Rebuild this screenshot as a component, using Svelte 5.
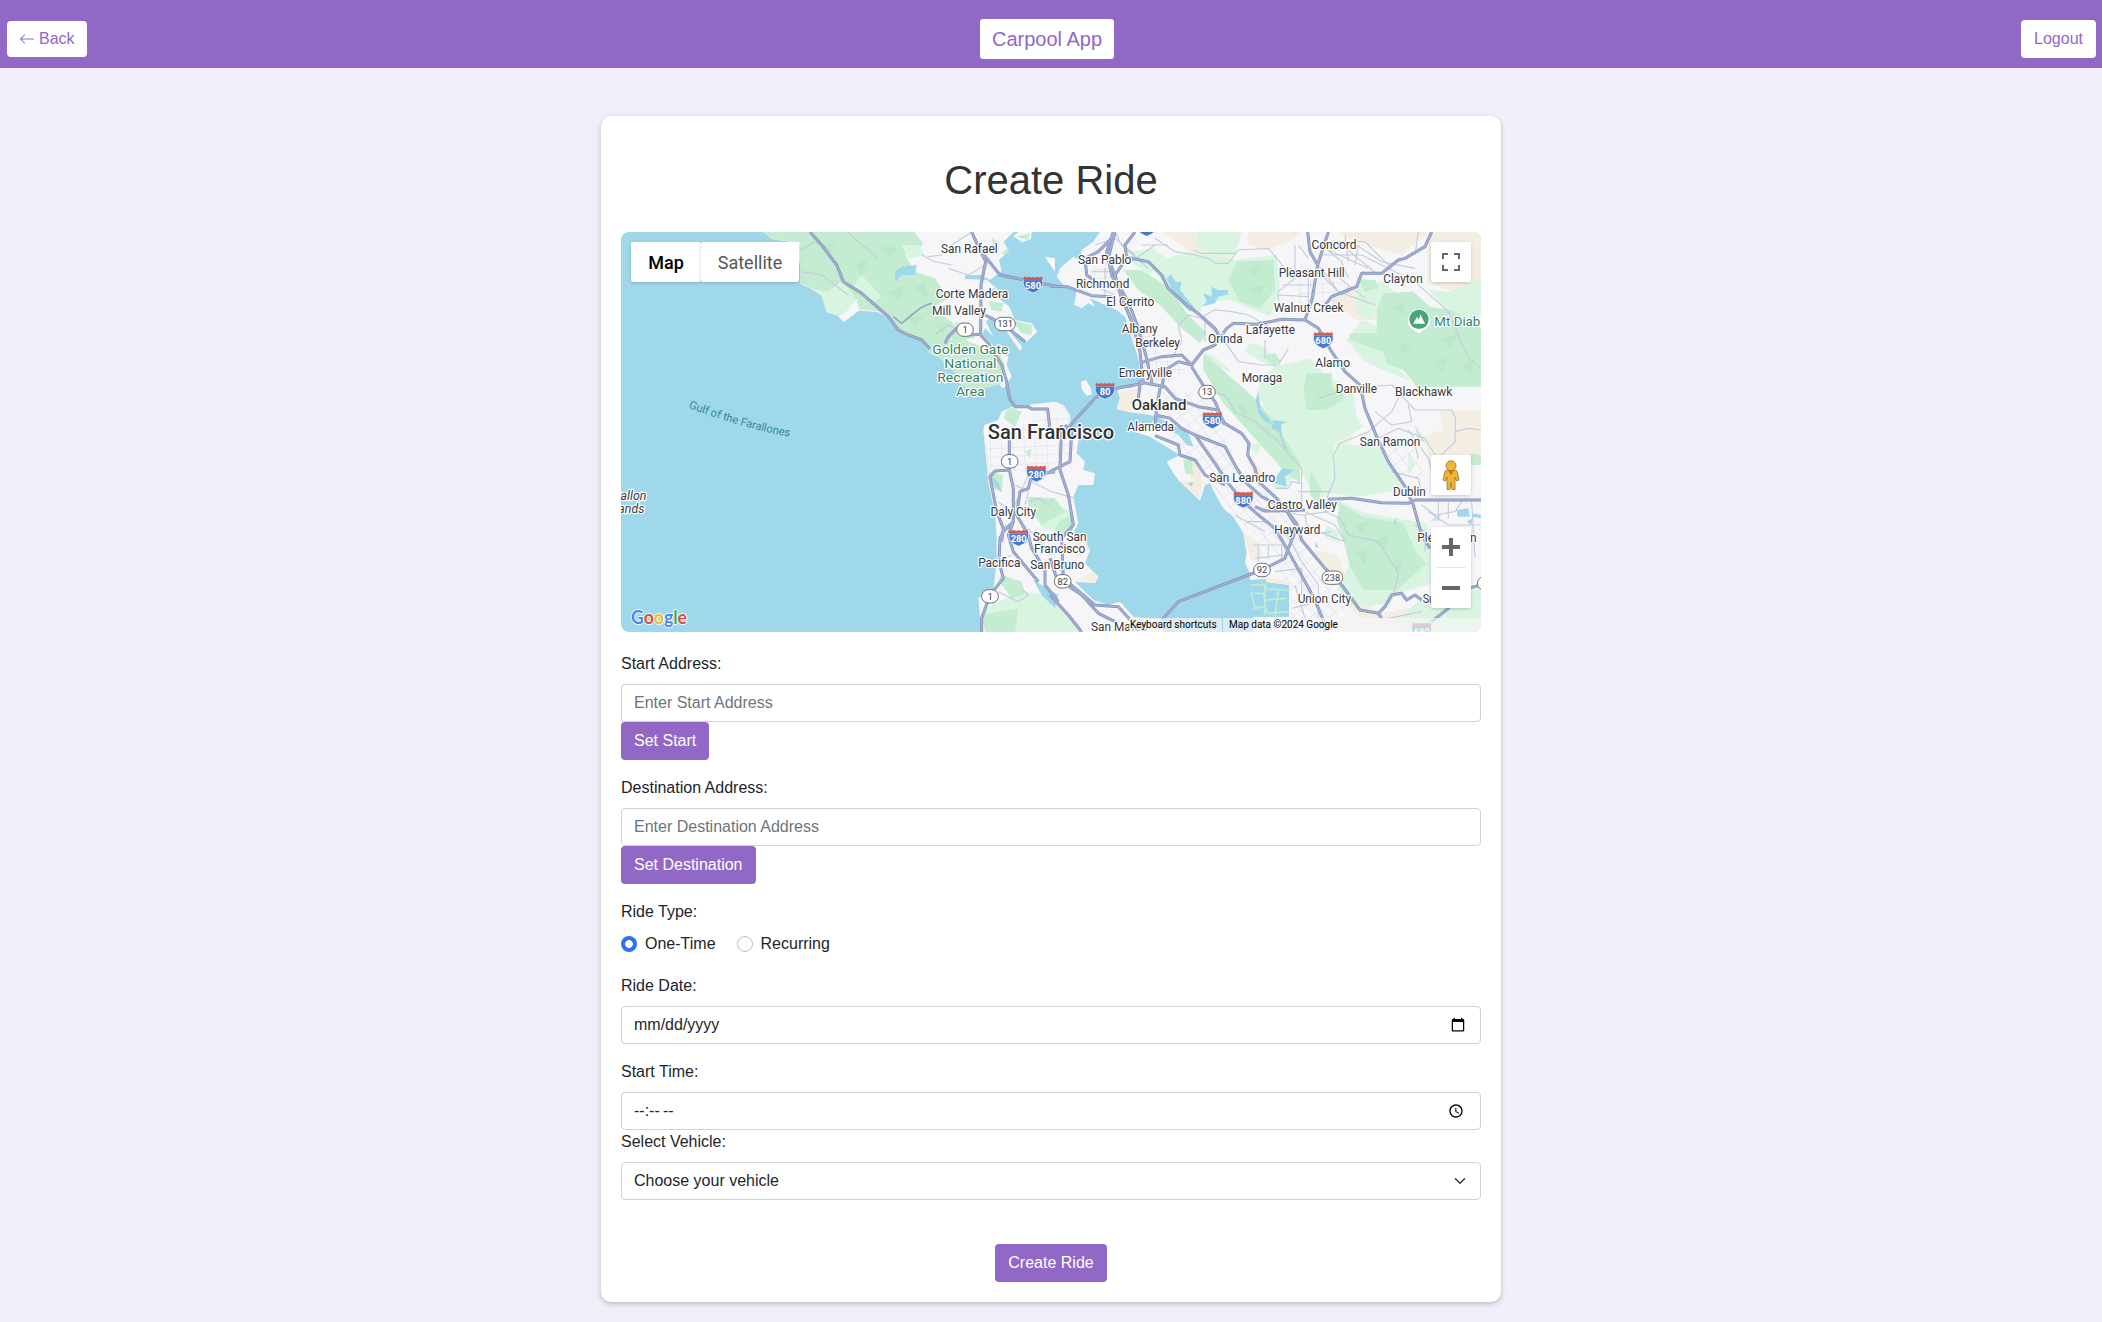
<script>
  let rideType = $state('one-time');

  const water = '#a0d8eb';

  const land = [
    // Marin
    'M445 21L470 42L530 52L556 120L556 176L590 193L620 212L635 262L668 272L687 291L705 277L733 256L790 256L830 280L850 312L880 335L920 350L945 385L975 398L1000 430L1022 442L1020 465L1052 487L1100 492L1150 478L1165 490L1190 455L1175 420L1180 395L1150 380L1120 345L1102 328L1110 308L1135 335L1112 290L1130 272L1165 305L1215 378L1222 366L1188 325L1235 350L1267 320L1250 295L1200 285L1183 245L1150 220L1146 190L1115 165L1050 163L1050 150L1100 150L1125 165L1160 138L1152 105L1182 78L1165 50L1195 21Z',
    'M1195 34L1210 21L1250 21L1248 42L1222 52Z',
    // San Francisco peninsula
    'M1190 545L1230 548L1250 538L1320 530L1345 540L1365 570L1368 615L1390 645L1385 685L1410 710L1405 735L1440 745L1435 780L1390 780L1375 815L1390 895L1375 925L1405 935L1425 975L1410 1015L1450 1055L1440 1075L1380 1070L1435 1125L1480 1140L1515 1130L1555 1175L1645 1185L1645 1221L1100 1221L1095 1175L1090 1120L1135 1095L1140 1055L1145 1015L1145 935L1140 865L1120 775L1115 715L1105 615L1108 600L1150 585L1160 560Z',
    // East Bay
    'M1455 21L1435 50L1400 75L1395 105L1375 95L1335 130L1325 155L1345 180L1385 195L1378 240L1400 250L1420 235L1440 245L1425 220L1505 255L1530 275L1550 340L1570 400L1580 470L1545 490L1505 487L1515 520L1505 552L1545 562L1605 570L1615 600L1540 615L1605 635L1695 690L1655 710L1675 745L1690 765L1755 827L1770 780L1785 775L1805 815L1825 850L1855 875L1885 925L1895 985L1890 1015L1905 1045L1905 1065L2022 1080L2022 1175L1915 1175L1915 1221L2598 1221L2598 21Z',
    'M1398 470L1412 465L1428 490L1430 508L1415 512L1400 492Z',
    'M1290 95L1320 100L1320 140L1306 120Z'
  ];

  const sand = [
    'M1640 21L1720 75L1790 100L1850 130L1840 60L1800 21Z', 'M1900 21L2060 21L2040 40L1960 75L1900 60Z',
    'M2170 21L2440 21L2360 90L2290 70L2200 40Z', 'M2135 215L2225 195L2300 285L2225 285L2165 245Z', 'M2230 175L2310 170L2340 205L2300 250Z',
    'M2440 21L2598 21L2598 170L2500 195L2440 175Z', 'M1515 500L1580 490L1550 540L1600 565L1510 555Z',
    'M1705 690L1745 700L1765 775L1750 825L1685 765L1730 770Z', 'M2425 635L2485 615L2475 555L2598 555L2598 705L2440 700Z',
    'M2075 615L2225 600L2205 655L2155 665L2145 700L2105 665Z', 'M1910 700L1945 740L1935 775L1915 740Z',
    'M1885 925L1930 950L1945 1000L1910 1010Z', 'M2095 975L2170 990L2190 1055L2130 1030Z',
    'M2195 1095L2295 1165L2405 1145L2470 1150L2410 1195L2265 1205L2190 1135Z', 'M1390 1065L1440 1035L1445 1075Z',
    'M1375 925L1405 935L1425 975L1385 1000Z', 'M1105 615L1120 700L1135 830L1145 865L1120 775Z', 'M1925 1050L2030 1070L2020 1085L1925 1070Z'
  ];

  const paleGreen = [
    'M860 60L930 50L900 90L870 85Z', 'M1750 21L1880 21L1860 90L1790 90L1740 60Z', 'M1530 80L1605 75L1620 130L1605 150L1560 120Z',
    'M1605 65L1665 105L1715 85L1805 125L1865 165L1865 215L1805 225L1765 235L1755 265L1715 255L1665 195L1605 125Z',
    'M1655 100L1720 80L1860 105L1985 90L1995 195L1965 275L1845 225L1775 230L1705 245L1665 175Z',
    'M1975 425L2085 400L2125 445L2215 495L2225 575L2245 605L2160 655L2145 805L2105 825L2045 715L2005 655L1965 575L1925 505L1935 475Z',
    'M2165 655L2295 665L2365 795L2225 815L2145 805Z', 'M2225 155L2305 175L2345 205L2285 255L2265 285L2225 265Z',
    'M2440 195L2500 200L2598 160L2598 300L2500 260Z', 'M2195 345L2240 285L2310 310L2320 400L2390 470L2340 450L2250 410Z',
    'M1900 355L1935 360L1980 395L1985 430L1940 410L1890 380Z', 'M1760 380L1800 395L1850 440L1810 430Z',
    'M2165 825L2255 865L2435 895L2455 975L2455 1075L2345 1105L2325 1135L2245 1145L2165 1095L2205 1015Z',
    'M1985 745L2040 750L2010 795L1970 785Z', 'M2350 1180L2420 1120L2598 1090L2598 1221L2360 1221Z',
    'M1220 1100L1310 1110L1370 1180L1390 1221L1110 1221L1110 1150Z', 'M1250 815L1310 830L1370 860L1350 930L1280 910Z',
    'M2380 680L2400 720L2380 750Z', 'M1900 660L1945 650L1925 690Z', 'M2130 900L2170 920L2175 955L2130 940Z'
  ];

  const green = [
    'M445 21L900 21L930 55L870 90L900 140L960 160L1000 220L950 250L1010 290L1060 350L1150 380L1170 420L1160 478L1100 492L1052 487L1020 465L1000 430L945 385L850 312L733 256L710 205L680 170L640 200L600 195L556 175L556 52L470 42Z',
    'M1120 230L1165 235L1160 260L1130 255Z', 'M1190 285L1250 300L1250 330L1220 325Z', 'M1255 382L1290 355L1305 378L1302 400L1262 396Z',
    'M1160 85L1190 65L1180 95Z', 'M1205 35L1245 25L1240 45Z', 'M1180 545L1220 560L1200 605L1165 580Z',
    'M1525 135L1580 135L1665 190L1715 265L1775 325L1755 355L1695 305L1635 240L1570 195Z',
    'M1865 110L1975 105L1980 195L1935 250L1875 230L1840 165Z',
    'M2285 255L2305 205L2395 200L2445 245L2505 255L2598 305L2598 485L2505 485L2405 485L2365 435L2315 415L2305 380L2205 345L2205 325L2285 325Z',
    'M1765 385L1845 455L1915 515L1975 585L2055 715L2055 775L2005 735L1915 635L1825 535L1765 435Z',
    'M2075 445L2150 445L2150 485L2185 495L2185 525L2135 555L2075 555L2065 495Z',
    'M1940 390L1980 385L1998 410L1975 420Z', 'M2230 165L2280 165L2290 190L2250 200Z', 'M2185 200L2200 180L2205 205Z',
    'M2175 835L2245 875L2365 895L2405 985L2435 1015L2345 1095L2245 1095L2205 1025L2185 945L2165 885Z',
    'M1240 815L1320 820L1350 860L1280 900L1240 850Z', 'M1120 740L1165 750L1160 800L1130 790Z', 'M1160 1050L1220 1070L1230 1110L1190 1120L1150 1065Z',
    'M1100 1170L1210 1150L1200 1221L1110 1221Z', 'M1370 870L1375 925L1310 940L1330 890Z', 'M1230 680L1250 670L1245 700Z',
    'M2085 740L2120 790L2110 835L2085 810Z', 'M2400 600L2430 650L2410 650Z', 'M2565 685L2598 690L2598 720L2565 720Z', 'M2440 890L2480 865L2470 885Z', 'M1705 705L1730 700L1735 750L1710 745Z'
  ];

  // hillside facets
  const shade = [
    'M620 60L660 50L640 90ZM720 120L760 100L740 150ZM800 60L850 70L820 100ZM820 200L870 180L850 230ZM900 190L930 170L940 220ZM880 280L930 270L900 310ZM960 300L990 290L985 330Z',
    'M2330 250L2360 230L2370 270ZM2400 300L2440 290L2420 330ZM2480 340L2530 330L2500 370ZM2350 360L2390 350L2370 390ZM2450 410L2500 400L2480 440ZM2540 420L2580 400L2570 450ZM2520 290L2550 290L2560 320Z',
    'M2220 900L2260 890L2240 930ZM2280 950L2320 930L2310 980ZM2220 980L2260 970L2250 1020ZM2330 1010L2370 1000L2350 1050ZM1900 130L1940 120L1920 160ZM1900 190L1950 180L1930 220ZM1860 540L1890 540L1900 580ZM1930 600L1960 610L1970 650Z'
  ];

  const ponds = [
    'M1505 560L1620 572L1655 590L1720 625L1735 665L1715 660L1690 630L1625 590L1510 568Z',
    'M1655 160L1668 148L1682 170L1700 170L1695 195L1740 250L1725 260L1680 215Z', 'M1758 245L1775 230L1765 205L1790 215L1790 185L1808 195L1838 195L1840 208L1810 215L1800 235Z',
    'M1922 525L1930 500L1938 555L1962 580L1972 600L1950 590L1930 565Z', 'M1975 585L2015 590L1998 600L2002 640L2018 675L2005 665L1992 620L1970 610Z',
    'M1985 755L2000 730L2038 735L2010 755L2015 785L1980 775Z', 'M2525 855L2560 850L2565 875L2528 875Z', 'M2572 865L2598 870L2598 880L2572 876Z', 'M2555 890L2572 880L2570 900Z',
    'M1255 1065L1330 1110L1320 1150L1280 1110Z', 'M1125 750L1150 770L1160 800L1140 785Z', 'M2335 890L2345 880L2342 900Z', 'M2100 965L2105 950L2110 970Z',
    'M1905 1065L1950 1062L1960 1080L2022 1082L2022 1175L1915 1175L1905 1150Z',
    'M840 140L860 125L905 120L900 150L860 150L842 170Z', 'M1718 775L1735 770L1730 785Z'
  ];

  const minor = [
    // trails and back roads
    'M555 75L600 50L650 80M560 140L620 150L700 210M700 21L740 60L780 90L785 105M920 90L960 110L1010 120M1000 130L1060 150L1120 115M960 330L1000 300L1020 310M1130 200L1150 180M1070 21L1010 60L980 90L940 95',
    'M1620 40L1680 80L1740 90L1780 100L1800 115L1840 115L1870 75L1960 70L2010 130L2030 130M1735 75L1760 85L1860 85M2050 60L2080 100M1690 300L1720 270L1760 280L1800 320M1830 350L1870 410L1940 420L1990 420L2020 370M1950 345L1950 400',
    'M1770 350L1770 270L1800 255L1850 260L1900 270L1990 320M1780 500L1830 510L1860 560L1920 590L1980 640L2060 730L2060 790M1690 300L1700 350L1670 400M2110 520L2200 490L2330 480L2400 555L2510 555L2522 580L2520 650L2480 690L2460 740',
    'M2135 820L2160 760L2155 690L2175 655L2260 620L2330 560L2360 500M2140 820L2130 860L2175 880L2200 930L2290 950L2350 1045L2335 1110M2598 615L2560 610L2520 620',
    'M2040 60L2040 160L1990 200L1990 250M2080 130L2080 240M2110 120L2170 200L2280 240M2120 90L2240 90L2400 170L2500 260L2560 400L2598 430M2210 50L2300 110L2400 130M2180 60L2290 150M2410 21L2400 90',
    'M2120 60L2180 110L2200 160M2140 75L2260 130M2150 50L2250 50L2330 130M2190 30L2200 110M2230 60L2220 120M2000 180L2090 180M1990 210L2080 215M2120 150L2180 210L2220 190M2150 140L2250 220',
    'M2380 615L2440 700L2450 740M2330 740L2410 760L2420 810M2440 860L2500 900L2598 900M2420 840L2460 870L2520 860L2540 830M2320 1180L2420 1160M2040 1080L2070 1180M2000 900L2060 1010L2110 1080L2110 1180',
    'M2280 560L2330 600L2390 590L2380 540M2290 640L2350 610L2430 640L2460 690M2320 660L2400 660L2410 700M2470 830L2470 890M2500 830L2500 880M2400 900L2430 920L2430 980M2570 830L2580 1000',
    'M1915 960L2000 960L2000 1000M1920 1000L2010 990M1930 960L1930 1010M1960 960L1960 1000M2070 860L2160 900L2190 950L2110 920L2080 900M2000 860L2060 870L2140 860M1890 890L1960 890L2000 950M1860 870L1950 920',
    'M1980 790L2020 790L2030 770L2060 775L2060 830M2050 800L2150 800M2070 870L2080 930L2150 920M1980 1040L2060 1030L2060 1110M2030 1150L2110 1130',
    'M1200 780L1240 800L1230 840M1150 830L1190 860M1240 830L1270 820L1300 840L1310 825M1170 900L1200 920M1240 910L1310 990M1190 990L1170 1000M1150 1100L1210 1130L1240 1110L1220 1090M1250 770L1310 800L1380 820M1240 750L1200 840',
    'M1440 60L1500 40L1560 90M1470 130L1470 210M1430 140L1510 140M1550 110L1620 60M1580 60L1660 60M1430 180L1500 210M1500 21L1520 60L1600 130'
  ];

  const major = [
    // US-101 and Highway 1 in Marin
    'M585 21L620 60L665 120L685 170L740 205L820 275L850 315L880 330L920 345L945 372', 'M1070 21L1095 75L1155 150L1230 165L1320 183',
    'M1095 75L1112 110L1098 180L1097 330L1120 355L1160 420L1175 470L1183 520L1200 545L1240 545L1250 552L1298 552L1305 615', 'M1110 270L1140 285L1180 310L1230 350', 'M990 355L1000 335L1025 310L1060 330L1097 328',
    // Richmond bridge and I-80
    'M1305 183L1355 185L1430 212L1490 215', 'M1495 21L1475 80L1490 150L1515 200L1550 290L1575 380L1585 475', 'M1500 21L1480 100L1510 180L1540 230L1570 310L1595 400L1612 480', 'M1560 21L1530 60L1535 100L1500 150L1520 220L1560 310',
    'M1490 40L1450 80L1410 100L1415 150L1435 165', 'M1530 95L1600 110L1640 150L1660 190L1715 240L1755 270L1800 310L1812 332', 'M1580 412L1640 395L1700 390L1730 420', 'M1585 475L1480 495L1440 520L1375 590L1350 620',
    // Highway 24, 13 and 580
    'M1570 470L1650 485L1680 520L1750 545L1810 555', 'M1640 490L1650 435L1690 410L1730 420L1765 375L1800 360L1835 310L1855 295L1925 298L2000 283L2070 285', 'M1730 425L1770 490L1800 530L1830 600',
    'M1635 490L1625 550L1620 600', 'M1575 480L1570 520L1550 535', 'M1620 570L1665 580L1700 610L1740 630L1800 715L1840 775L1885 830L1930 870L1980 910L2015 970L2095 1115L2125 1185L2130 1221', 'M1740 630L1830 665L1860 720L1890 770L1940 815L2010 850L2045 905',
    'M1820 590L1880 625L1902 655L1898 690L1920 730L1930 770L1985 820L2045 895L2060 945L2130 1030L2180 1080L2235 1155L2290 1165M1620 632L1690 660L1695 690L1740 705L1770 750L1830 780',
    // I-680
    'M2078 21L2085 80L2108 120L2092 220L2070 285L2110 310L2150 380L2190 440L2235 480L2250 550L2285 635L2320 710L2370 785L2395 840L2420 930L2445 970M2140 21L2108 120', 'M2450 21L2430 65L2370 100L2350 105L2300 145L2240 145L2225 185L2150 215L2115 260',
    'M1920 845L1950 858L2070 855M2140 823L2210 820L2300 833L2380 835L2400 825L2598 825', 'M2045 910L2020 970L2010 1000L1940 1035L1690 1130L1640 1185', 'M2420 1125L2400 1110L2375 1125L2360 1105L2330 1110L2310 1145L2290 1165L2300 1180M2598 1080L2540 1095L2500 1150L2450 1190',
    // Peninsula
    'M1183 640L1183 735L1195 790L1195 890L1165 920L1155 940L1152 1010L1165 1060L1125 1110L1100 1180L1100 1221', 'M1183 735L1140 738L1125 755L1145 860L1165 910L1160 950', 'M1320 740L1250 750L1240 790L1215 800L1205 870L1240 930L1250 970L1290 1035L1290 1080L1330 1130',
    'M1195 890L1180 930L1195 980L1270 1070', 'M1340 600L1335 735L1360 810L1375 900L1340 940L1345 1060L1440 1140L1510 1145L1560 1200', 'M1305 740L1365 710L1370 620L1350 600M1305 1000L1325 1060L1400 1110L1450 1165L1500 1190M1305 1110L1360 1170L1400 1221'
  ];

  // text, centre x, baseline, width
  const towns = [
    ['San Rafael', 1063, 85, 170], ['Corte Madera', 1071, 219, 218], ['Mill Valley', 1032, 271, 162],
    ['Concord', 2157, 73, 135], ['San Pablo', 1469, 116, 160], ['Pleasant Hill', 2090, 155, 198], ['Clayton', 2364, 175, 118],
    ['Richmond', 1463, 190, 160], ['El Cerrito', 1546, 244, 144], ['Walnut Creek', 2081, 261, 210], ['Albany', 1574, 325, 108],
    ['Berkeley', 1628, 367, 134], ['Lafayette', 1966, 328, 148], ['Orinda', 1831, 353, 104], ['Alamo', 2153, 426, 104],
    ['Emeryville', 1591, 456, 160], ['Moraga', 1941, 470, 122], ['Danville', 2224, 505, 124], ['Blackhawk', 2426, 514, 172],
    ['Alameda', 1607, 617, 140], ['Daly City', 1195, 874, 137], ['Pacifica', 1153, 1027, 127], ['South San', 1334, 949, 162],
    ['Francisco', 1334, 985, 154], ['San Bruno', 1327, 1033, 162], ['San Leandro', 1882, 771, 198], ['San Ramon', 2325, 663, 182],
    ['Dublin', 2383, 814, 98], ['Castro Valley', 2062, 853, 208], ['Hayward', 2047, 928, 138], ['Union City', 2128, 1135, 160],
    ['Pleasanton', 2496, 951, 178], ['San Mateo', 1513, 1219, 170], ['Sunol', 2463, 1133, 80]
  ];
  const parkLines = [['Golden Gate', 387, 228], ['National', 430, 157], ['Recreation', 472, 198], ['Area', 514, 86]];

  const interstates = [
    ['580', 1254, 178], ['80', 1470, 497], ['680', 2125, 345], ['580', 1792, 585], ['280', 1264, 745],
    ['280', 1211, 938], ['880', 1885, 823], ['680', 2420, 1216], ['80', 1595, 8]
  ];
  const routes = [
    ['1', 1050, 314], ['131', 1170, 297], ['13', 1776, 501], ['1', 1184, 709], ['1', 1125, 1114],
    ['92', 1941, 1035], ['238', 2152, 1058], ['82', 1343, 1069], ['84', 2612, 1075]
  ];
</script>

<div class="page">
  <header class="navbar">
    <button class="nav-btn back">
      <svg width="16" height="16" viewBox="0 0 16 16" fill="currentColor" aria-hidden="true">
        <path fill-rule="evenodd" d="M15 8a.5.5 0 0 0-.5-.5H2.707l3.147-3.146a.5.5 0 1 0-.708-.708l-4 4a.5.5 0 0 0 0 .708l4 4a.5.5 0 0 0 .708-.708L2.707 8.500H14.500A.5.5 0 0 0 15 8z" />
      </svg>
      <span>Back</span>
    </button>
    <span class="brand">Carpool App</span>
    <button class="nav-btn logout">Logout</button>
  </header>

  <main class="card">
    <h1>Create Ride</h1>

    <div class="map">
      <svg class="tiles" viewBox="18 21 2580 1200" aria-label="Map">
        <defs>
          <clipPath id="shore">
            {#each land as d}<path {d} />{/each}
          </clipPath>
          <pattern id="grid" width="34" height="26" patternUnits="userSpaceOnUse" patternTransform="rotate(-3)">
            <path d="M0 0H34M0 0V26" class="street" />
          </pattern>
          <pattern id="slant" width="34" height="26" patternUnits="userSpaceOnUse" patternTransform="rotate(52)">
            <path d="M0 0H34M0 0V26" class="street" />
          </pattern>
          <path id="gulf" d="M220 548Q370 606 522 635" />
        </defs>
        <rect x="18" y="21" width="2580" height="1200" fill={water} />
        {#each land as d}<path {d} fill="#f6f6f8" />{/each}
        <g clip-path="url(#shore)">
          {#each sand as d}<path {d} fill="#f4eee2" />{/each}
          {#each paleGreen as d}<path {d} fill="#d9f5e2" />{/each}
          {#each green as d}<path {d} fill="#c3ecd0" />{/each}
          {#each shade as d}<path {d} fill="#b9e5c8" opacity=".7" />{/each}
          <path d="M600 195L640 200L680 172L712 205L733 256L705 277L687 291L668 272L635 262L620 212ZM710 190L740 150L800 215L780 230ZM860 60L910 60L930 90L880 100Z" fill="#d9f5e2" />
          <path d="M725 222L733 256L705 277L687 291L668 274L690 265ZM900 21H1195L1165 80L1120 170L1180 245L1110 330L1060 320L1010 230L980 170L975 120L920 50Z" fill="#f6f6f8" />
          <path d="M1120 228L1165 235L1160 260L1130 255ZM1160 85L1185 62L1180 92ZM1130 40L1150 50L1135 60ZM1020 290L1060 300L1080 340L1030 345Z" fill="#c3ecd0" />
          <path fill="url(#grid)" d="M1115 620L1200 600L1370 560L1370 730L1230 740L1120 735ZM1530 290L1630 300L1640 400L1720 430L1640 490L1590 470ZM1410 90L1500 90L1510 200L1430 195ZM2040 130L2190 130L2190 240L2050 240Z" />
          <path fill="url(#slant)" d="M1620 500L1760 500L1830 620L1860 720L1960 800L2040 890L2120 1040L2200 1140L2140 1200L2030 1190L1990 1010L1900 910L1760 770L1620 590ZM1400 1110L1330 1060L1230 970L1200 900L1240 900L1320 1010ZM2300 650L2380 640L2430 760L2340 760Z" />
          {#each minor as d}<path {d} class="minor" />{/each}
        </g>
        {#each ponds as d}<path {d} fill={water} />{/each}
        <path d="M1907 1080L1950 1078L1955 1092L2020 1095M1915 1105H1945L1950 1125L2015 1120M1915 1150L1950 1145L1960 1165L2020 1160M1950 1078V1170M1990 1095L1980 1172M1908 1100L1920 1150" class="levee" />
        <path d="M733 255L790 260L830 283" class="beach" />
        <path d="M835 275L860 295L890 270L915 250L935 240L950 235" class="arterial" />
        {#each major as d}<path {d} class="casing" />{/each}
        {#each major as d}<path {d} class="road" />{/each}

        {#each interstates as [n, x, y]}
          <g transform="translate({x} {y})">
            <path class="shield" d="M-29-14H29Q35 14 0 26Q-35 14-29-14Z" />
            <path fill="#cf5b56" d="M-27-24Q-20-18-13-23Q-6-18 0-23Q6-18 13-23Q20-18 27-24L29-13H-29Z" />
            <text y="13" class="shield-no">{n}</text>
          </g>
        {/each}
        {#each routes as [n, x, y]}
          <g transform="translate({x} {y})">
            <rect x={n.length > 2 ? -31 : -25} y="-20" width={n.length > 2 ? 62 : 50} height="40" rx="20" class="route" />
            <text y="10" class="route-no">{n}</text>
          </g>
        {/each}

        <g transform="translate(2412 288)">
          <path d="M0 39L-26 22A35 35 0 1 1 26 22Z" fill="#fff" stroke="#c8d4cc" stroke-width="2" />
          <circle cy="-5" r="29" fill="#47a578" />
          <path d="M-18 8L-6-12L0-4L4-20L18 8Z" fill="#fff" />
        </g>

        {#each towns as [name, x, y, w]}
          <text {x} {y} textLength={w} lengthAdjust="spacingAndGlyphs" class="town">{name}</text>
        {/each}
        {#each parkLines as [name, y, w]}
          <text x="1066" {y} textLength={w} lengthAdjust="spacingAndGlyphs" class="park">{name}</text>
        {/each}
        <text x="2458" y="302" class="park from-left">Mt Diablo</text>
        <text x="1632" y="556" textLength="164" lengthAdjust="spacingAndGlyphs" class="city">Oakland</text>
        <text x="1308" y="642" textLength="379" lengthAdjust="spacingAndGlyphs" class="metro">San Francisco</text>
        <text class="isle" x="94" y="826">Farallon</text>
        <text class="isle" x="88" y="863">Islands</text>
        <text class="gulf"><textPath href="#gulf" textLength="316">Gulf of the Farallones</textPath></text>
        <text class="google" x="48" y="1197" textLength="168" lengthAdjust="spacingAndGlyphs"><tspan fill="#4a86f0">G</tspan><tspan fill="#e0493c">o</tspan><tspan fill="#f3bb2b">o</tspan><tspan fill="#4a86f0">g</tspan><tspan fill="#3fa757">l</tspan><tspan fill="#e0493c">e</tspan></text>
      </svg>

      <div class="map-type">
        <button class="active">Map</button>
        <button>Satellite</button>
      </div>

      <button class="control fullscreen" aria-label="Toggle fullscreen view">
        <svg width="18" height="18" viewBox="0 0 18 18" fill="#666">
          <path d="M0 0H6V2H2V6H0ZM12 0H18V6H16V2H12ZM0 12H2V16H6V18H0ZM16 12H18V18H12V16H16Z" />
        </svg>
      </button>

      <button class="control pegman" aria-label="Street View">
        <svg width="18" height="31" viewBox="0 0 18 31">
          <path d="M5 10H13Q15 10 15.500 13L17 20L14.500 21L13 17V29.500H10L9 22L8 29.500H5V17L3.500 21L1 20L2.500 13Q3 10 5 10Z" fill="#f2b632" stroke="#8e7440" stroke-width=".8" />
          <path d="M6 10.500H12L9 15.500Z" fill="#df6f27" />
          <circle cx="9" cy="5.800" r="5" fill="#f2b632" stroke="#8e7440" stroke-width=".8" />
        </svg>
      </button>

      <div class="zoom">
        <button aria-label="Zoom in">
          <svg width="18" height="18" viewBox="0 0 18 18" fill="#666"><path d="M7 0H11V7H18V11H11V18H7V11H0V7H7Z" /></svg>
        </button>
        <i></i>
        <button aria-label="Zoom out">
          <svg width="18" height="18" viewBox="0 0 18 18" fill="#666"><path d="M0 7H18V11H0Z" /></svg>
        </button>
      </div>

      <div class="credits">
        <span>Keyboard shortcuts</span>
        <span>Map data ©2024 Google</span>
      </div>
    </div>

    <form onsubmit={(e) => e.preventDefault()}>
      <div class="group">
        <label for="start">Start Address:</label>
        <input id="start" class="field" type="text" placeholder="Enter Start Address" />
        <button type="button" class="btn">Set Start</button>
      </div>

      <div class="group">
        <label for="dest">Destination Address:</label>
        <input id="dest" class="field" type="text" placeholder="Enter Destination Address" />
        <button type="button" class="btn">Set Destination</button>
      </div>

      <div class="group">
        <span class="label">Ride Type:</span>
        <div class="radios">
          <label class="radio"><input type="radio" bind:group={rideType} value="one-time" />One-Time</label>
          <label class="radio"><input type="radio" bind:group={rideType} value="recurring" />Recurring</label>
        </div>
      </div>

      <div class="group">
        <label for="date">Ride Date:</label>
        <input id="date" class="field" type="date" />
      </div>

      <div>
        <label for="time">Start Time:</label>
        <input id="time" class="field" type="time" />
      </div>

      <div>
        <label for="vehicle">Select Vehicle:</label>
        <div class="select">
          <select id="vehicle" class="field">
            <option>Choose your vehicle</option>
          </select>
          <svg width="16" height="12" viewBox="0 0 16 16" aria-hidden="true">
            <path d="m2 5 6 6 6-6" fill="none" stroke="#343a40" stroke-width="2" stroke-linecap="round" stroke-linejoin="round" />
          </svg>
        </div>
      </div>

      <div class="submit"><button class="btn">Create Ride</button></div>
    </form>
  </main>
</div>

<style>
  :global(body) {
    margin: 0;
    background: #f1eef9;
    font-family: 'Liberation Sans', Arial, sans-serif;
    font-size: 16px;
    line-height: 1.5;
    color: #212529;
  }
  .page, .page :global(*) { box-sizing: border-box; }
  .page { min-height: 1322px; }
  button, input, select { font: inherit; margin: 0; }

  .navbar {
    display: flex;
    align-items: center;
    justify-content: space-between;
    height: 68px;
    padding: 10px 6px 0 7px;
    background: #9268c6;
  }
  .nav-btn {
    height: 38px;
    padding: 0 12px;
    border: 0;
    border-radius: 4px;
    background: #fff;
    color: #9268c6;
  }
  .back { display: flex; align-items: center; gap: 4px; width: 80px; height: 36px; }
  .logout { width: 75px; }
  .brand {
    width: 134px;
    margin-right: 14px;
    padding: 5px 0;
    border-radius: 3px;
    background: #fff;
    color: #9268c6;
    font-size: 20px;
    text-align: center;
  }

  .card {
    width: 900px;
    height: 1186px;
    margin: 48px auto 0;
    padding: 20px;
    border-radius: 10px;
    background: #fff;
    box-shadow: 0 2px 5px rgba(0, 0, 0, .22);
  }
  h1 {
    margin: 20px 0 28px;
    font-size: 40px;
    font-weight: 400;
    line-height: 1.2;
    text-align: center;
    color: #333;
  }

  .map {
    position: relative;
    height: 400px;
    margin-bottom: 20px;
    overflow: hidden;
    border-radius: 8px;
    font-family: Roboto, sans-serif;
  }
  .tiles { display: block; width: 860px; height: 400px; }
  .street { fill: none; stroke: #d6dce8; stroke-width: 3; }
  .minor { fill: none; stroke: #c5cddd; stroke-width: 3.500; stroke-linejoin: round; }
  .levee { fill: none; stroke: #c3ecd0; stroke-width: 5; }
  .beach { fill: none; stroke: #f4eee2; stroke-width: 4; }
  .arterial { fill: none; stroke: #98a6c6; stroke-width: 5; stroke-linejoin: round; }
  .casing { fill: none; stroke: #8090b8; stroke-width: 9; stroke-linejoin: round; }
  .road { fill: none; stroke: #a5b0d2; stroke-width: 5; stroke-linejoin: round; }
  .shield { fill: #4878c9; stroke: #fff; stroke-width: 2; }
  .shield-no { fill: #fff; font-size: 28px; font-weight: 700; text-anchor: middle; }
  .route { fill: #fff; stroke: #6c7177; stroke-width: 3; }
  .route-no { fill: #3c4043; font-size: 28px; text-anchor: middle; }
  .town, .park, .city, .metro, .isle {
    text-anchor: middle;
    paint-order: stroke;
    stroke: #fff;
    stroke-width: 7px;
    stroke-linejoin: round;
    fill: #35383c;
    font-size: 37px;
  }
  .park { fill: #35825f; font-size: 40px; }
  .from-left { text-anchor: start; }
  .city { font-size: 46px; font-weight: 500; fill: #303338; }
  .metro { font-size: 59px; font-weight: 500; fill: #303338; }
  .isle { text-anchor: end; font-style: italic; }
  .gulf { font-size: 34px; fill: #34899a; }
  .google {
    font-family: Lato, sans-serif;
    font-size: 56px;
    font-weight: 700;
    paint-order: stroke;
    stroke: #fff;
    stroke-width: 5px;
  }

  .map-type {
    position: absolute;
    top: 10px;
    left: 10px;
    display: flex;
  }
  .map-type button {
    width: 98px;
    height: 40px;
    padding: 0;
    border: 0;
    border-radius: 2px;
    background: #fff;
    box-shadow: 0 1px 4px -1px rgba(0, 0, 0, .3);
    color: #565656;
    font-size: 18px;
  }
  .map-type .active { width: 70px; color: #000; font-weight: 500; }
  .control, .zoom {
    position: absolute;
    right: 10px;
    width: 40px;
    height: 40px;
    padding: 0;
    border: 0;
    border-radius: 2px;
    background: #fff;
    box-shadow: 0 1px 4px -1px rgba(0, 0, 0, .3);
  }
  .control { display: flex; align-items: center; justify-content: center; }
  .fullscreen { top: 10px; }
  .pegman { top: 223px; }
  .zoom { top: 295px; display: flex; flex-direction: column; align-items: center; height: 81px; }
  .zoom button { display: flex; align-items: center; justify-content: center; width: 40px; height: 40px; padding: 0; border: 0; background: none; }
  .zoom i { width: 30px; height: 1px; background: #e6e6e6; }
  .credits {
    position: absolute;
    right: 0;
    bottom: 0;
    display: flex;
    width: 352px;
    height: 14px;
    background: rgba(245, 245, 245, .7);
    color: #000;
    font-size: 10px;
    line-height: 14px;
    white-space: nowrap;
  }
  .credits span { padding: 0 6px; }
  .credits span:first-child { width: 94px; padding-left: 1px; border-right: 1px solid #a0d8eb; }

  label, .label { display: block; height: 24px; margin-bottom: 8px; }
  .group { margin-bottom: 16px; }
  .field {
    display: block;
    width: 100%;
    height: 38px;
    padding: 6px 12px;
    border: 1px solid #ced4da;
    border-radius: 4px;
    background: #fff;
    color: #212529;
    line-height: 1.5;
  }
  .field::placeholder { color: #6c757d; opacity: 1; }
  .field::-webkit-datetime-edit-text,
  .field::-webkit-datetime-edit-month-field,
  .field::-webkit-datetime-edit-day-field,
  .field::-webkit-datetime-edit-year-field,
  .field::-webkit-datetime-edit-hour-field,
  .field::-webkit-datetime-edit-minute-field,
  .field::-webkit-datetime-edit-ampm-field { padding: 0; }
  .btn {
    display: block;
    height: 38px;
    padding: 6px 13px;
    border: 0;
    border-radius: 4px;
    background: #9268c6;
    color: #fff;
    line-height: 24px;
  }
  .radios { display: flex; gap: 21px; height: 26px; }
  .radio { display: flex; align-items: center; gap: 8px; margin: 0; }
  .radio input {
    appearance: none;
    width: 16px;
    height: 16px;
    border: 1px solid #bfbfbf;
    border-radius: 50%;
    background: #fff;
  }
  .radio input:checked { border: 0; background: radial-gradient(circle, #fff 3.600px, #2f6ff5 4.200px); }
  .select { position: relative; }
  .select select { appearance: none; }
  .select svg { position: absolute; top: 13px; right: 13px; }
  .submit { display: flex; justify-content: center; margin-top: 44px; }
</style>
